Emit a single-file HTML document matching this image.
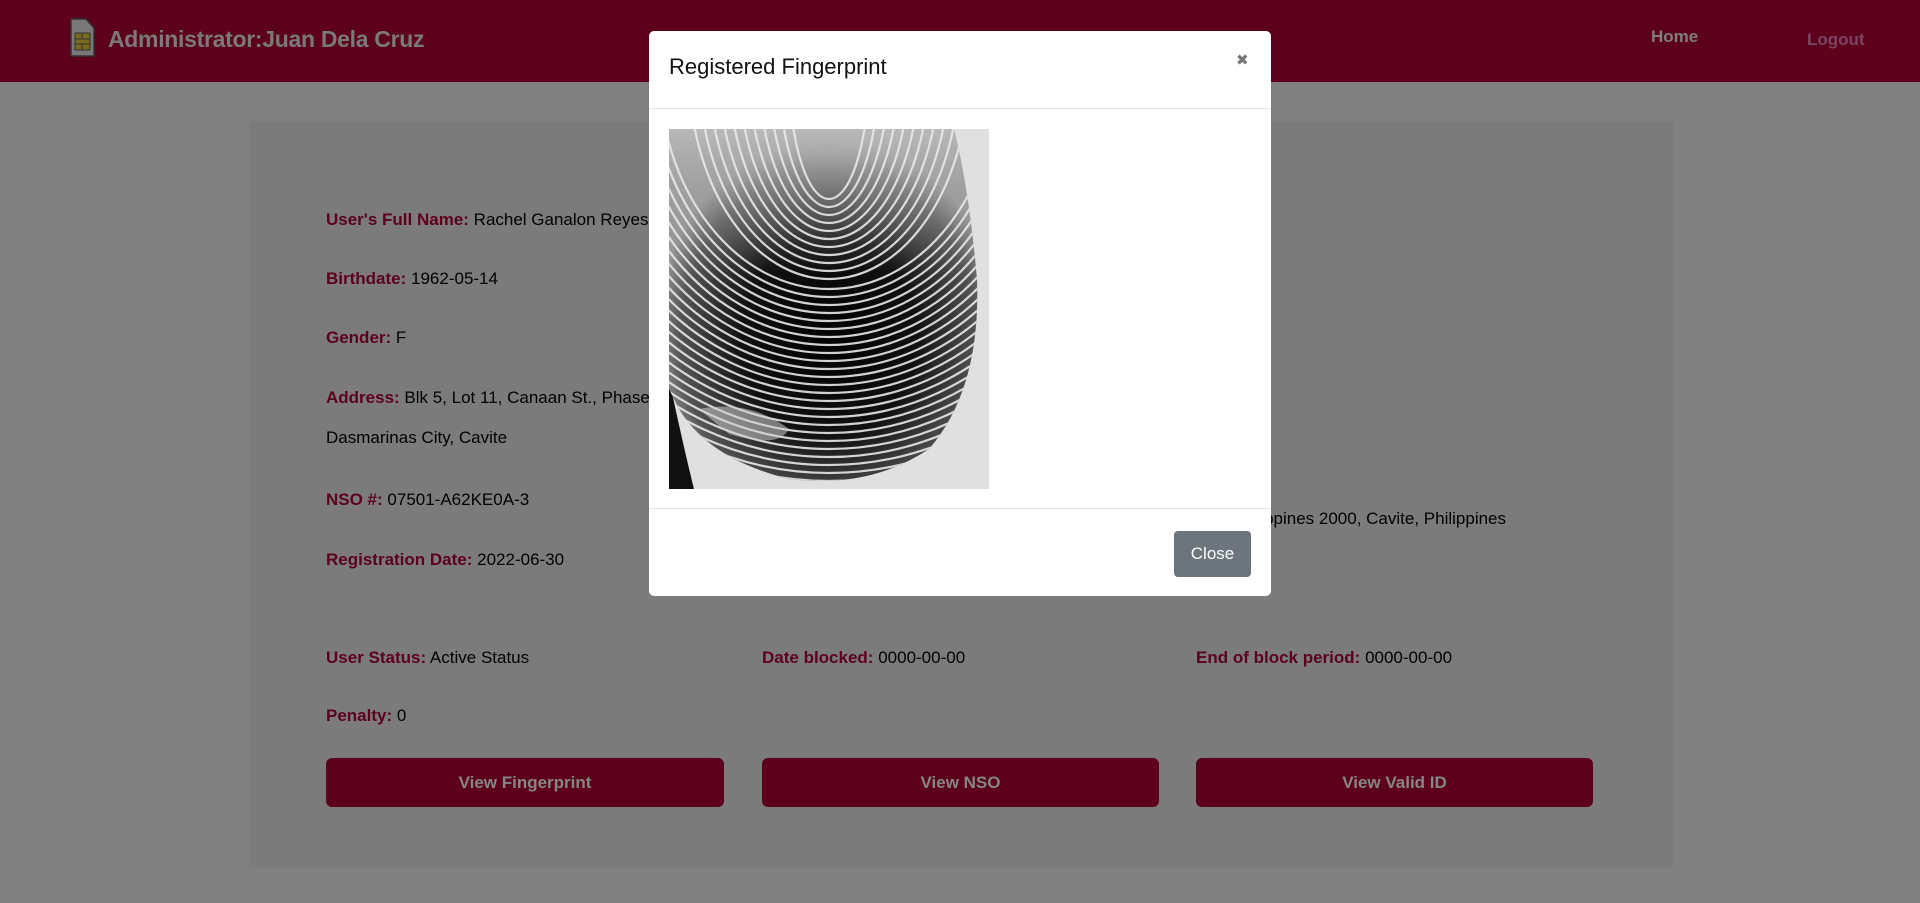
<!DOCTYPE html>
<html><head><meta charset="utf-8"><style>
*{box-sizing:border-box;margin:0;padding:0}
body{width:1920px;height:903px;overflow:hidden;background:#808080;font-family:"Liberation Sans",sans-serif;position:relative}
.nav{position:absolute;left:0;top:0;width:1920px;height:82px;background:#5c001c}
.brand{position:absolute;left:108px;top:26px;font-size:23px;font-weight:bold;color:#7a7a7a;letter-spacing:-0.3px}
.nav a{position:absolute;font-size:17px;font-weight:bold;text-decoration:none}
.card{position:absolute;left:249px;top:121px;width:1424px;height:747px;background:#7b7b7b}
.f{position:absolute;font-size:17px;color:#000;white-space:nowrap}
.f b{color:#5c001c}
.btn{position:absolute;top:758px;height:49px;width:398px;background:#5c001c;border-radius:6px;color:#868686;font-weight:bold;font-size:17px;text-align:center;line-height:49px}
.modal{position:absolute;left:649px;top:31px;width:622px;height:565px;background:#fff;border-radius:5px}
.mh{height:78px;border-bottom:1px solid #e3e3e3;position:relative}
.mh h5{position:absolute;left:20px;top:23px;font-size:22px;font-weight:normal;color:#111}
.x{position:absolute;left:587px;top:20px;font-size:15px;color:#777}
.mf{position:absolute;left:0;top:477px;width:622px;border-top:1px solid #e3e3e3;height:88px}
.close{position:absolute;left:525px;top:22px;width:77px;height:46px;background:#6c757d;border-radius:4px;color:#fff;font-size:17px;text-align:center;line-height:46px}
</style></head><body>
<div class="nav">
<svg style="position:absolute;left:69px;top:18px" width="26" height="40" viewBox="0 0 26 40"><path d="M2 1h15l8 9v28H2z" fill="#787878" stroke="#333" stroke-width="1.5"/><rect x="6" y="15" width="15" height="17" rx="1" fill="#7a6a1e" stroke="#333"/><path d="M6 21h15M6 26h15M13 15v6M13 26v6" stroke="#333"/></svg>
<div class="brand">Administrator:Juan Dela Cruz</div>
<a style="left:1651px;top:27px;color:#7e7e7e">Home</a>
<a style="left:1807px;top:30px;color:#7a4660">Logout</a>
</div>
<div class="card"></div>
<div class="f" style="left:326px;top:210px"><b>User's Full Name:</b> Rachel Ganalon Reyes</div>
<div class="f" style="left:326px;top:269px"><b>Birthdate:</b> 1962-05-14</div>
<div class="f" style="left:326px;top:328px"><b>Gender:</b> F</div>
<div class="f" style="left:326px;top:388px"><b>Address:</b> Blk 5, Lot 11, Canaan St., Phase</div>
<div class="f" style="left:326px;top:428px">Dasmarinas City, Cavite</div>
<div class="f" style="left:326px;top:490px"><b>NSO #:</b> 07501-A62KE0A-3</div>
<div class="f" style="left:326px;top:550px"><b>Registration Date:</b> 2022-06-30</div>
<div class="f" style="right:414px;top:509px">Dasmarinas City, Philippines 2000, Cavite, Philippines</div>
<div class="f" style="left:326px;top:648px"><b>User Status:</b> Active Status</div>
<div class="f" style="left:762px;top:648px"><b>Date blocked:</b> 0000-00-00</div>
<div class="f" style="left:1196px;top:648px"><b>End of block period:</b> 0000-00-00</div>
<div class="f" style="left:326px;top:706px"><b>Penalty:</b> 0</div>
<div class="btn" style="left:326px">View Fingerprint</div>
<div class="btn" style="left:762px;width:397px">View NSO</div>
<div class="btn" style="left:1196px;width:397px">View Valid ID</div>
<div class="modal">
<div class="mh"><h5>Registered Fingerprint</h5><span class="x">&#10006;</span></div>
<svg style="position:absolute;left:20px;top:98px" width="320" height="360" viewBox="0 0 320 360">
<defs>
<radialGradient id="g" cx="0.5" cy="0.58" r="0.55"><stop offset="0" stop-color="#000"/><stop offset="0.5" stop-color="#111"/><stop offset="0.85" stop-color="#555"/><stop offset="1" stop-color="#999"/></radialGradient>
<linearGradient id="t" x1="0" y1="0" x2="0" y2="1"><stop offset="0" stop-color="#bbb" stop-opacity="0.95"/><stop offset="0.4" stop-color="#888" stop-opacity="0"/></linearGradient>
<clipPath id="c"><path d="M0 0H285Q300 60 308 150Q312 260 260 320Q200 360 120 350Q40 330 10 280L0 260Z"/></clipPath>
</defs>
<rect width="320" height="360" fill="#e0e0e0"/>
<path d="M0 360V250Q15 320 25 360Z" fill="#111"/>
<g clip-path="url(#c)">
<rect width="320" height="360" fill="url(#g)"/>
<rect width="320" height="360" fill="url(#t)"/>
<g fill="none" stroke="#e8e8e8" stroke-width="2.2" opacity="0.9">
<ellipse cx="160" cy="-60" rx="40" ry="130"/><ellipse cx="160" cy="-60" rx="50" ry="138"/><ellipse cx="160" cy="-60" rx="60" ry="146"/><ellipse cx="160" cy="-60" rx="70" ry="154"/><ellipse cx="160" cy="-60" rx="80" ry="162"/><ellipse cx="160" cy="-60" rx="90" ry="170"/><ellipse cx="160" cy="-60" rx="100" ry="178"/><ellipse cx="160" cy="-60" rx="110" ry="186"/><ellipse cx="160" cy="-60" rx="120" ry="194"/><ellipse cx="160" cy="-60" rx="130" ry="202"/><ellipse cx="160" cy="-60" rx="140" ry="210"/>
<ellipse cx="160" cy="-60" rx="170" ry="220"/><ellipse cx="160" cy="-60" rx="178" ry="228"/><ellipse cx="160" cy="-60" rx="186" ry="236"/><ellipse cx="160" cy="-60" rx="194" ry="244"/><ellipse cx="160" cy="-60" rx="202" ry="252"/><ellipse cx="160" cy="-60" rx="210" ry="260"/><ellipse cx="160" cy="-60" rx="218" ry="268"/><ellipse cx="160" cy="-60" rx="226" ry="276"/><ellipse cx="160" cy="-60" rx="234" ry="284"/><ellipse cx="160" cy="-60" rx="242" ry="292"/><ellipse cx="160" cy="-60" rx="250" ry="300"/><ellipse cx="160" cy="-60" rx="258" ry="308"/><ellipse cx="160" cy="-60" rx="266" ry="316"/><ellipse cx="160" cy="-60" rx="274" ry="324"/><ellipse cx="160" cy="-60" rx="282" ry="332"/><ellipse cx="160" cy="-60" rx="290" ry="340"/><ellipse cx="160" cy="-60" rx="298" ry="348"/><ellipse cx="160" cy="-60" rx="306" ry="356"/><ellipse cx="160" cy="-60" rx="314" ry="364"/><ellipse cx="160" cy="-60" rx="322" ry="372"/><ellipse cx="160" cy="-60" rx="330" ry="380"/><ellipse cx="160" cy="-60" rx="338" ry="388"/><ellipse cx="160" cy="-60" rx="346" ry="396"/><ellipse cx="160" cy="-60" rx="354" ry="404"/><ellipse cx="160" cy="-60" rx="362" ry="412"/>
</g>
<path d="M30 280Q80 270 120 300Q110 320 60 305Z" fill="#ccc" opacity="0.55"/>
</g>
</svg>
<div class="mf"><div class="close">Close</div></div>
</div>
</body></html>
